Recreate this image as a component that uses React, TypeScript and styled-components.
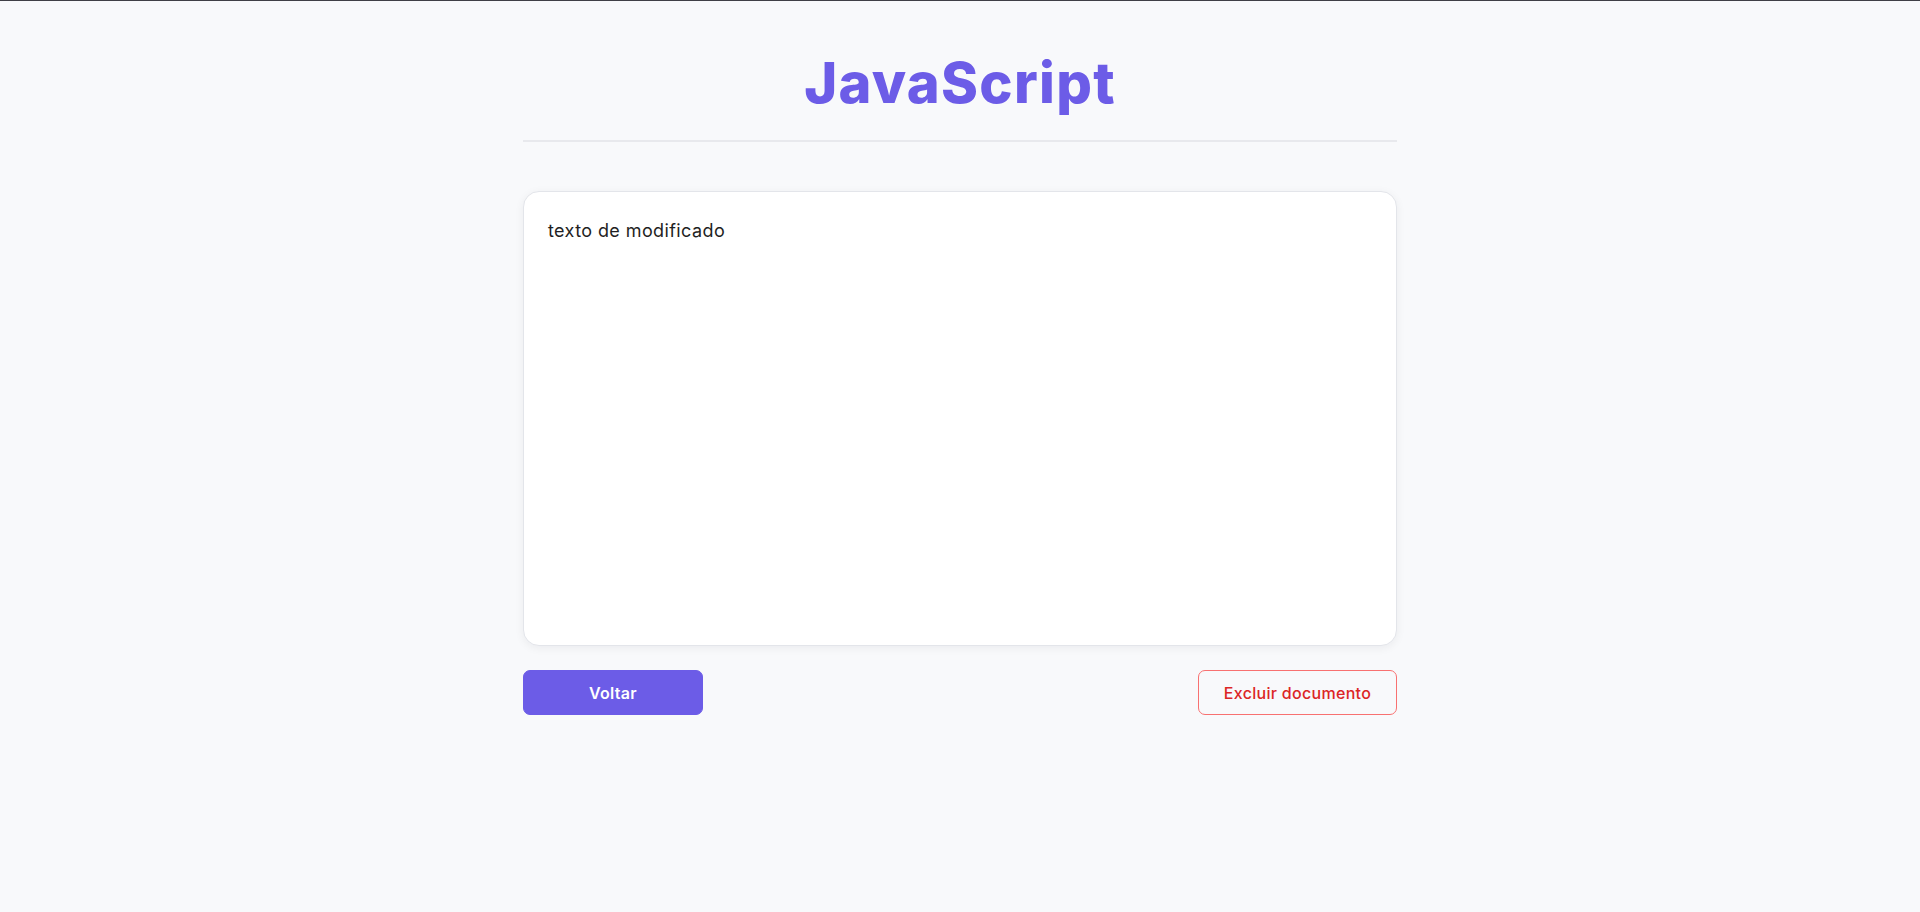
import styled, { createGlobalStyle } from "styled-components";

const GlobalStyle = createGlobalStyle`
  html, body {
    margin: 0;
    padding: 0;
    background: #f8f9fb;
    font-family: "Inter", "Noto Sans", sans-serif;
  }
  body {
    border-top: 1px solid #3f3f46;
    min-height: 911px;
  }
`

const Page = styled.main`
  width: 874px;
  margin: 0 auto;
  display: flex;
  flex-direction: column;
`

const Header = styled.header`
  padding-top: 44px;
  padding-bottom: 19px;
  border-bottom: 2px solid #e8e9ed;
  display: flex;
  justify-content: center;
`

const Title = styled.h1`
  margin: 0;
  font-size: 56px;
  line-height: 76px;
  font-weight: 800;
  color: #6c5ce7;
  letter-spacing: 1.3px;
`

const Editor = styled.div`
  margin-top: 49px;
  height: 455px;
  box-sizing: border-box;
  background: #ffffff;
  border: 1px solid #e3e5ea;
  border-radius: 16px;
  box-shadow: 0 2px 10px rgba(17, 24, 39, 0.06);
  padding: 25px 24px;
`

const EditorText = styled.p`
  margin: 0;
  font-size: 18px;
  line-height: 28px;
  letter-spacing: 0.4px;
  color: #1f1f23;
`

const Actions = styled.div`
  margin-top: 24px;
  display: flex;
  justify-content: space-between;
  align-items: center;
`

const Button = styled.button<{ $variant: "primary" | "danger" }>`
  height: 45px;
  box-sizing: border-box;
  border-radius: 7px;
  font-family: inherit;
  font-size: 16px;
  letter-spacing: 0.3px;
  cursor: pointer;
  width: ${p => (p.$variant === "primary" ? "180px" : "199px")};
  font-weight: ${p => (p.$variant === "primary" ? 600 : 500)};
  background: ${p => (p.$variant === "primary" ? "#6c5ce7" : "transparent")};
  color: ${p => (p.$variant === "primary" ? "#ffffff" : "#dc2626")};
  border: 1px solid ${p => (p.$variant === "primary" ? "#6c5ce7" : "#f87171")};
`

export default function App() {
  return (
    <>
      <GlobalStyle />
      <Page>
        <Header>
          <Title>JavaScript</Title>
        </Header>
        <Editor>
          <EditorText>texto de modificado</EditorText>
        </Editor>
        <Actions>
          <Button $variant="primary">Voltar</Button>
          <Button $variant="danger">Excluir documento</Button>
        </Actions>
      </Page>
    </>
  )
}
